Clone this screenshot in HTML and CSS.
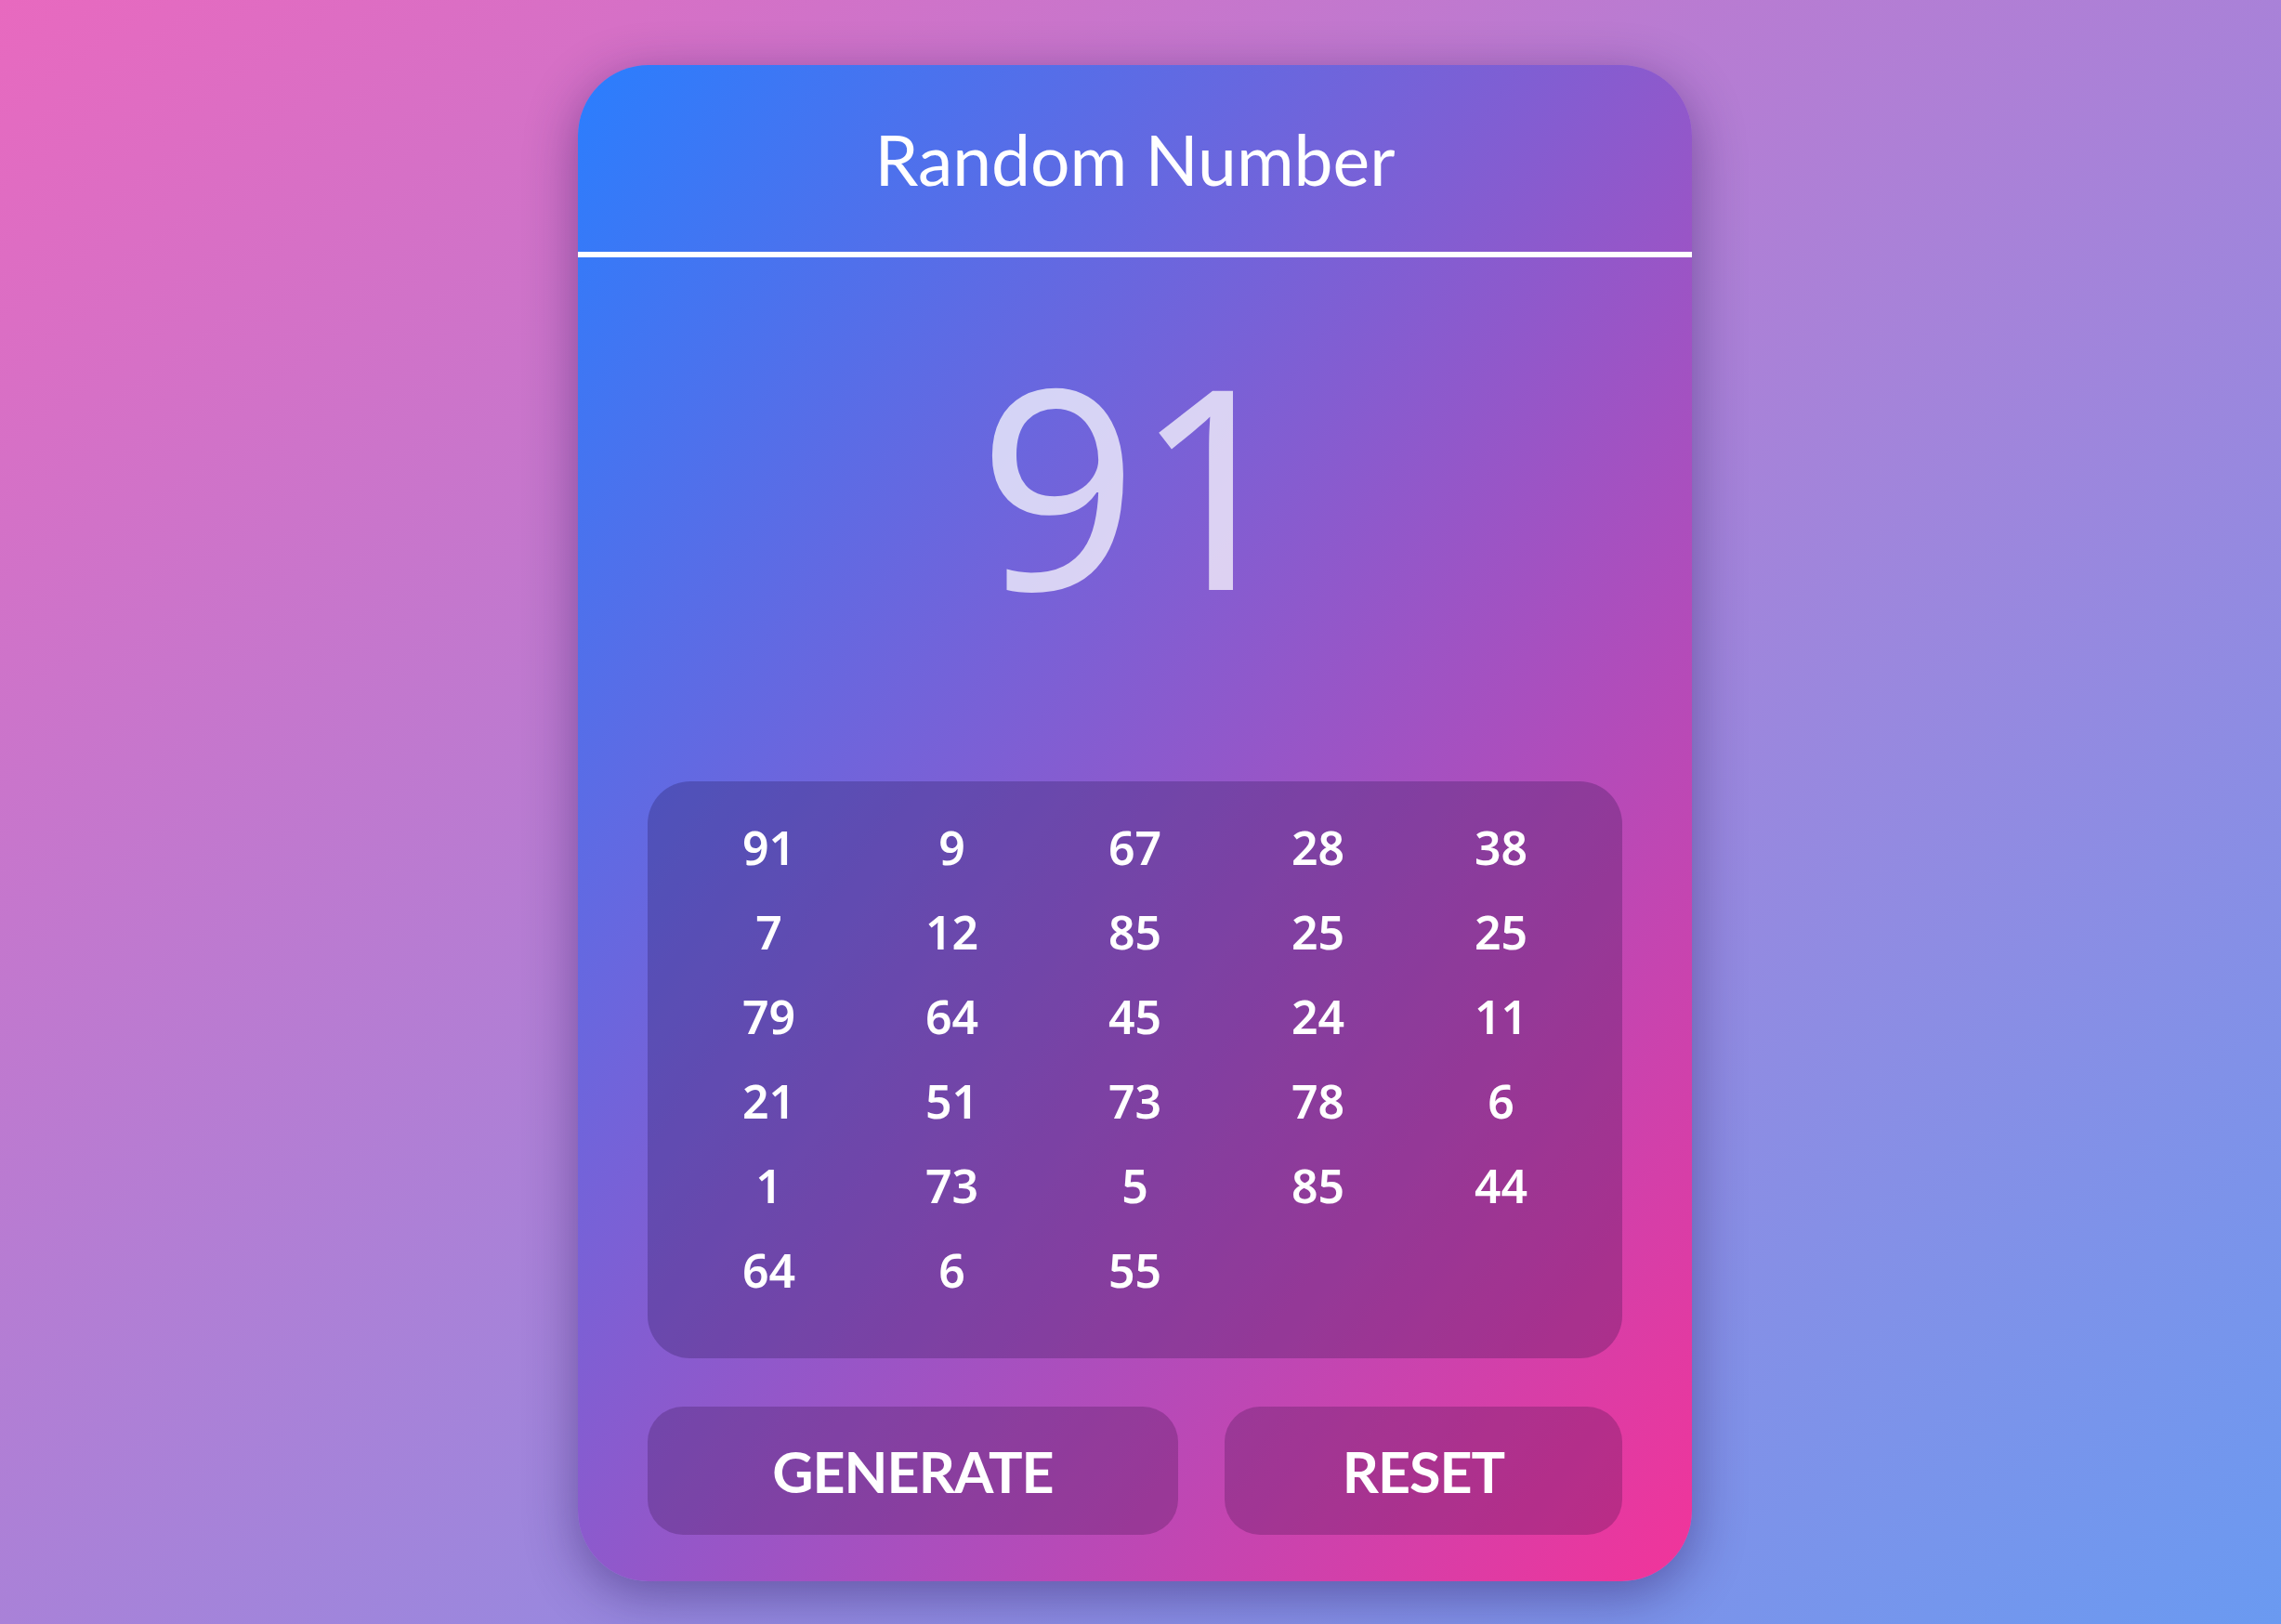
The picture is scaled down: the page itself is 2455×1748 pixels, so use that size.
FILE: index.html
```html
<!DOCTYPE html>
<html lang="en">
<head>
<meta charset="utf-8">
<title>Random Number</title>
<link rel="stylesheet" href="styles.css">
</head>
<body>
<div class="page">
  <div class="card">
    <header class="card-header">
      <h1 class="title">Random Number</h1>
    </header>
    <div class="display">91</div>
    <div class="content">
      <div class="history">
        <span>91</span><span>9</span><span>67</span><span>28</span><span>38</span>
        <span>7</span><span>12</span><span>85</span><span>25</span><span>25</span>
        <span>79</span><span>64</span><span>45</span><span>24</span><span>11</span>
        <span>21</span><span>51</span><span>73</span><span>78</span><span>6</span>
        <span>1</span><span>73</span><span>5</span><span>85</span><span>44</span>
        <span>64</span><span>6</span><span>55</span>
      </div>
      <div class="actions">
        <button class="btn btn-generate">GENERATE</button>
        <button class="btn btn-reset">RESET</button>
      </div>
    </div>
  </div>
</div>
</body>
</html>
```

FILE: styles.css
```css
* { box-sizing: border-box; }

html, body {
  margin: 0;
  padding: 0;
}

body {
  font-family: "Trebuchet MS", Lato, "Noto Sans", sans-serif;
  background: linear-gradient(to bottom right, #e869bf, #6a9af1);
  min-height: 1748px;
  color: #fff;
}

.page {
  display: flex;
  justify-content: center;
  align-items: flex-start;
  padding: 70px 12px 0 0;
  min-height: 1748px;
}

.card {
  width: 1199px;
  border-radius: 76px;
  background: linear-gradient(to bottom right, #2a7efe, #f2349a);
  box-shadow: 0 14px 55px rgba(40, 20, 90, 0.45);
  overflow: hidden;
}

.card-header {
  height: 207px;
  border-bottom: 6px solid #fff;
  display: flex;
  align-items: center;
  justify-content: center;
}

.title {
  margin: 0;
  font-weight: 400;
  font-size: 75px;
  line-height: 1;
  color: #fff;
  padding-top: 2px;
}

.display {
  margin: 92px 0 172px;
  font-family: "Noto Sans", "Open Sans", sans-serif;
  font-size: 300px;
  line-height: 1;
  text-align: center;
  color: rgba(255, 255, 255, 0.72);
  letter-spacing: -4px;
  padding-right: 2px;
}

.content {
  padding: 0 75px 50px;
}

.history {
  display: grid;
  grid-template-columns: repeat(5, 1fr);
  grid-auto-rows: 91px;
  padding: 25px 32px 50px;
  background: rgba(20, 10, 60, 0.24);
  border-radius: 46px;
}

.history span {
  display: flex;
  align-items: center;
  justify-content: center;
  font-family: "Noto Sans", "Open Sans", sans-serif;
  font-weight: 600;
  font-size: 50px;
  letter-spacing: 0;
  color: #fff;
}

.actions {
  display: flex;
  gap: 50px;
  margin-top: 52px;
}

.btn {
  height: 138px;
  border: none;
  border-radius: 38px;
  background: rgba(40, 10, 60, 0.24);
  color: #fff;
  font-family: inherit;
  font-weight: 700;
  font-size: 61px;
  letter-spacing: -1px;
  padding: 0;
  cursor: pointer;
}

.btn-generate { flex: 4 1 0; }
.btn-reset { flex: 3 1 0; }
```
